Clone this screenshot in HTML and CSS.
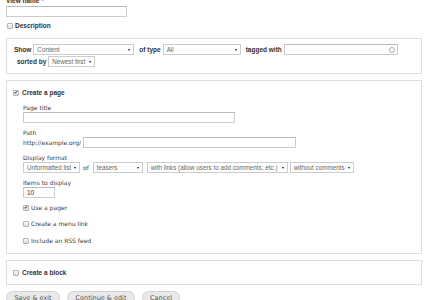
FILE: index.html
```html
<!DOCTYPE html>
<html lang="en">
<head>
    <meta charset="UTF-8">
    <title>Add new view</title>
    <link rel="stylesheet" href="styles.css">
</head>
<body>

<div class="page">
    <div class="form-item top-item">
        <label class="title strong">View name <span class="req">*</span></label>
        <div class="text w-name"></div>
    </div>
    <div class="check-row desc">
        <span class="box"></span><label class="strong">Description</label>
    </div>

    <fieldset class="panel show-panel">
        <div class="row">
            <label class="strong">Show</label>
            <div class="select w-content">Content<span class="arrow"></span></div>
            <label class="strong gap">of type</label>
            <div class="select w-type">All<span class="arrow"></span></div>
            <label class="strong gap">tagged with</label>
            <div class="text auto w-tags"><span class="throbber"></span></div>
        </div>
        <div class="row second">
            <label class="strong">sorted by</label>
            <div class="select w-sort">Newest first<span class="arrow"></span></div>
        </div>
    </fieldset>

    <fieldset class="panel page-panel">
        <div class="check-row">
            <span class="box checked"></span><label class="strong">Create a page</label>
        </div>
        <div class="options">
            <div class="form-item first">
                <label class="title">Page title</label>
                <div class="text w-title"></div>
            </div>
            <div class="form-item">
                <label class="title">Path</label>
                <div class="row">
                    <span class="prefix">http://example.org/</span>
                    <div class="text w-path"></div>
                </div>
            </div>
            <div class="form-item">
                <label class="title">Display format</label>
                <div class="row">
                    <div class="select w-style">Unformatted list<span class="arrow"></span></div>
                    <span class="of">of</span>
                    <div class="select w-row">teasers<span class="arrow"></span></div>
                    <div class="select w-links">with links (allow users to add comments, etc.)<span class="arrow"></span></div>
                    <div class="select w-comments">without comments<span class="arrow"></span></div>
                </div>
            </div>
            <div class="form-item">
                <label class="title">Items to display</label>
                <div class="text w-items">10</div>
            </div>
            <div class="check-row small first-check">
                <span class="box checked"></span><label>Use a pager</label>
            </div>
            <div class="check-row small">
                <span class="box"></span><label>Create a menu link</label>
            </div>
            <div class="check-row small">
                <span class="box"></span><label>Include an RSS feed</label>
            </div>
        </div>
    </fieldset>

    <fieldset class="panel block-panel">
        <div class="check-row">
            <span class="box"></span><label class="strong">Create a block</label>
        </div>
    </fieldset>

    <div class="actions">
        <button class="button w-save">Save &amp; exit</button>
        <button class="button w-continue">Continue &amp; edit</button>
        <button class="button w-cancel">Cancel</button>
    </div>
</div>

</body>
</html>
```

FILE: styles.css
```css
body {
    margin: 0;
    font-family: "Liberation Sans", Arial, sans-serif;
    font-size: 6.5px;
    color: #333;
    background: #fff;
    overflow: hidden;
}
.page {
    margin: -3px 8px 0 6px;
}
label {
    line-height: 8px;
}
.strong {
    font-weight: bold;
}
.req {
    color: #e00;
}
/* plain labels use the verdana-like face */
.title,
.prefix,
.of,
.check-row.small label {
    font-family: "DejaVu Sans", Verdana, sans-serif;
    font-size: 6px;
    color: #3a3a3a;
}
.title {
    display: block;
}
.title.strong {
    font-family: "Liberation Sans", Arial, sans-serif;
    font-size: 6.5px;
    color: #333;
}
.form-item {
    margin-top: 6px;
}
.form-item.first {
    margin-top: 7px;
}
.top-item {
    margin-top: 0;
}
.top-item .title {
    margin-bottom: 1px;
}

/* inputs */
.text {
    box-sizing: border-box;
    flex: none;
    height: 11px;
    border: 1px solid #ccc;
    border-top-color: #bbb;
    background: #fff;
    padding: 0 3px;
    line-height: 9px;
    color: #333;
}
.w-name { width: 121px; }
.w-title { width: 212px; }
.w-path { width: 213px; }
.w-items { width: 32px; }
.w-tags {
    width: 114px;
    display: flex;
    justify-content: flex-end;
    align-items: center;
    padding-right: 2px;
}
.throbber {
    width: 4px;
    height: 4px;
    border: 1px solid #aaa;
    border-radius: 50%;
}

/* selects */
.select {
    box-sizing: border-box;
    flex: none;
    height: 11px;
    border: 1px solid #ccc;
    background: #fff;
    padding: 0 3px;
    line-height: 9px;
    font-size: 6.3px;
    color: #666;
    display: flex;
    justify-content: space-between;
    align-items: center;
    white-space: nowrap;
    overflow: hidden;
}
.arrow {
    width: 0;
    height: 0;
    border-left: 1.5px solid transparent;
    border-right: 1.5px solid transparent;
    border-top: 2.5px solid #111;
    margin-left: 3px;
    flex: none;
}
.w-content { width: 101px; }
.w-type { width: 78px; }
.w-sort { width: 47px; }
.w-style { width: 57px; }
.w-row { width: 50px; }
.w-links { width: 141px; margin-left: 4px; }
.w-comments { width: 64px; margin-left: 2px; }

/* rows */
.row {
    display: flex;
    align-items: center;
}
.row label {
    margin-right: 2px;
}
.row .gap {
    margin-left: 5px;
}
.row.second {
    margin-top: 1px;
    padding-left: 3px;
}
.prefix {
    margin-right: 2px;
}
.of {
    margin: 0 4px 0 3px;
}

/* checkboxes */
.check-row {
    display: flex;
    align-items: center;
    height: 9px;
}
.box {
    box-sizing: border-box;
    width: 6px;
    height: 6px;
    border: 1px solid #b4b4b4;
    border-radius: 1px;
    background: linear-gradient(#fafafa, #dcdcdc);
    margin-right: 3px;
    display: flex;
    align-items: center;
    justify-content: center;
    overflow: visible;
}
.box.checked::after {
    content: "\2714";
    font-size: 5px;
    line-height: 5px;
    color: #333;
}
.check-row.desc {
    margin-top: 4px;
    padding-left: 1px;
}
.check-row.desc .box {
    margin-right: 2px;
}
.check-row.small {
    margin-top: 7.5px;
}
.check-row.small.first-check {
    margin-top: 5px;
}
.check-row.small .box {
    margin-right: 2px;
}

/* fieldsets */
.panel {
    margin: 0;
    border: 1px solid #ddd;
    min-width: 0;
}
.show-panel {
    margin-top: 8px;
    padding: 5px 7px 6px;
}
.page-panel {
    margin-top: 6px;
    padding: 7px 7px 8px 6px;
}
.options {
    padding-left: 10px;
}
.block-panel {
    margin-top: 6px;
    padding: 7px 6px 7px;
}

/* buttons */
.actions {
    display: flex;
    gap: 7px;
    margin-top: 6px;
}
.button {
    box-sizing: border-box;
    height: 13px;
    border: 1px solid #d2d2d2;
    border-radius: 8px;
    background: #e9e9e9;
    color: #555;
    font-family: "DejaVu Sans", Verdana, sans-serif;
    font-size: 6.5px;
    padding: 0;
}
.w-save { width: 54px; }
.w-continue { width: 68px; }
.w-cancel { width: 38px; }
```
